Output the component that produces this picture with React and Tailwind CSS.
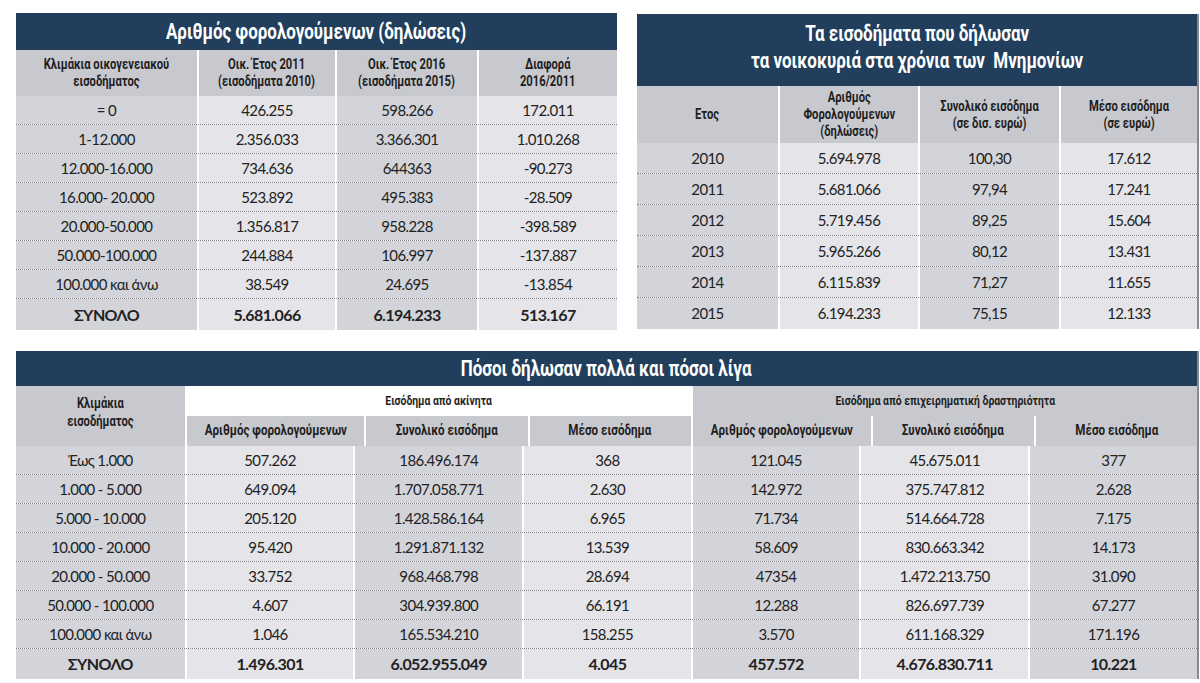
import React from "react";

const HEAD = { fontFamily: 'Roboto, "Liberation Sans", sans-serif' };
const BODY = { fontFamily: 'Lato, "Open Sans", "Liberation Sans", sans-serif' };

const DARK = "bg-[#d3d4da]";
const LIGHT = "bg-[#e4e4e9]";

const t1 = [
  ["= 0", "426.255", "598.266", "172.011"],
  ["1-12.000", "2.356.033", "3.366.301", "1.010.268"],
  ["12.000-16.000", "734.636", "644363", "-90.273"],
  ["16.000- 20.000", "523.892", "495.383", "-28.509"],
  ["20.000-50.000", "1.356.817", "958.228", "-398.589"],
  ["50.000-100.000", "244.884", "106.997", "-137.887"],
  ["100.000 και άνω", "38.549", "24.695", "-13.854"],
];
const t1w = ["w-[181px]", "w-[138px]", "w-[142px]", "w-[140px]"];

const t2 = [
  ["2010", "5.694.978", "100,30", "17.612"],
  ["2011", "5.681.066", "97,94", "17.241"],
  ["2012", "5.719.456", "89,25", "15.604"],
  ["2013", "5.965.266", "80,12", "13.431"],
  ["2014", "6.115.839", "71,27", "11.655"],
  ["2015", "6.194.233", "75,15", "12.133"],
];
const t2w = ["w-[141px]", "w-[140px]", "w-[141px]", "w-[138px]"];

const t3 = [
  ["Έως 1.000", "507.262", "186.496.174", "368", "121.045", "45.675.011", "377"],
  ["1.000 - 5.000", "649.094", "1.707.058.771", "2.630", "142.972", "375.747.812", "2.628"],
  ["5.000 - 10.000", "205.120", "1.428.586.164", "6.965", "71.734", "514.664.728", "7.175"],
  ["10.000 - 20.000", "95.420", "1.291.871.132", "13.539", "58.609", "830.663.342", "14.173"],
  ["20.000 - 50.000", "33.752", "968.468.798", "28.694", "47354", "1.472.213.750", "31.090"],
  ["50.000 - 100.000", "4.607", "304.939.800", "66.191", "12.288", "826.697.739", "67.277"],
  ["100.000 και άνω", "1.046", "165.534.210", "158.255", "3.570", "611.168.329", "171.196"],
];
const t3total = ["ΣΥΝΟΛΟ", "1.496.301", "6.052.955.049", "4.045", "457.572", "4.676.830.711", "10.221"];

function Narrow({ children }) {
  return <span className="inline-block scale-x-[0.8] whitespace-nowrap text-center">{children}</span>;
}

function Row({ cells, widths, h, bold, last }) {
  return (
    <div className={`flex ${h} ${!last ? "border-b border-dotted border-[#7c7c82]" : ""}`}>
      {cells.map((c, i) => (
        <div
          key={i}
          className={`${widths[i]} h-full ${i % 2 === 0 ? DARK : LIGHT} ${i > 0 ? "border-l-2 border-white" : ""} flex items-center justify-center text-[#222] whitespace-nowrap ${bold ? "font-bold text-[16px] tracking-[-0.6px]" : "text-[15px] tracking-[-0.6px]"}`}
          style={BODY}
        >
          {c}
        </div>
      ))}
    </div>
  );
}

function HeadCell({ children, w, i, h }) {
  return (
    <div
      className={`${w} ${h} bg-[#c8c9cf] ${i > 0 ? "border-l-2 border-white" : ""} flex items-center justify-center text-[14px] font-bold leading-[17px] text-[#1e1e1e]`}
      style={HEAD}
    >
      <Narrow>{children}</Narrow>
    </div>
  );
}

function Title({ children, h, extra = "" }) {
  return (
    <div className={`${h} bg-[#213f5c] flex items-center justify-center text-white text-[21.5px] font-bold leading-[27px] ${extra}`} style={HEAD}>
      <span className="inline-block scale-x-[0.79] whitespace-nowrap text-center">{children}</span>
    </div>
  );
}

function Table1() {
  return (
    <div className="w-[601px]">
      <Title h="h-[37px]">Αριθμός φορολογούμενων (δηλώσεις)</Title>
      <div className="flex">
        {[
          <>Κλιμάκια οικογενειακού<br />εισοδήματος</>,
          <>Οικ. Έτος 2011<br />(εισοδήματα 2010)</>,
          <>Οικ. Έτος 2016<br />(εισοδήματα 2015)</>,
          <>Διαφορά<br />2016/2011</>,
        ].map((c, i) => (
          <HeadCell key={i} i={i} w={t1w[i]} h="h-[46px]">{c}</HeadCell>
        ))}
      </div>
      {t1.map((r, k) => (
        <Row key={k} cells={r} widths={t1w} h="h-[29px]" />
      ))}
      <Row cells={["ΣΥΝΟΛΟ", "5.681.066", "6.194.233", "513.167"]} widths={t1w} h="h-[31px]" bold last />
    </div>
  );
}

function Table2() {
  return (
    <div className="w-[562px] border-r-2 border-[#8a8a8e] mt-[1px]">
      <Title h="h-[72px]" extra="pb-[6px]">
        Τα εισοδήματα που δήλωσαν<br />τα νοικοκυριά στα χρόνια των&nbsp; Μνημονίων
      </Title>
      <div className="flex">
        {[
          <>Ετος</>,
          <>Αριθμός<br />Φορολογούμενων<br />(δηλώσεις)</>,
          <>Συνολικό εισόδημα<br />(σε δισ. ευρώ)</>,
          <>Μέσο εισόδημα<br />(σε ευρώ)</>,
        ].map((c, i) => (
          <HeadCell key={i} i={i} w={t2w[i]} h="h-[57px]">{c}</HeadCell>
        ))}
      </div>
      {t2.map((r, k) => (
        <Row key={k} cells={r} widths={t2w} h="h-[31px]" last={k === t2.length - 1} />
      ))}
    </div>
  );
}

function Table3() {
  const w = Array(7).fill("w-[168.7px]");
  const sub = ["Αριθμός φορολογούμενων", "Συνολικό εισόδημα", "Μέσο εισόδημα"];
  const sub2 = ["Αριθμός φορολογούμενων", "Συνολικό  εισόδημα", "Μέσο εισόδημα"];
  return (
    <div className="w-[1183px] border-r-2 border-[#8a8a8e]">
      <Title h="h-[35px]">Πόσοι δήλωσαν πολλά και πόσοι λίγα</Title>
      <div className="flex h-[60px]">
        <div className="w-[168.7px] bg-[#c8c9cf] flex items-center justify-center text-[14px] font-bold leading-[18px] text-[#1e1e1e] pb-[8px]" style={HEAD}>
          <Narrow>Κλιμάκια<br />εισοδήματος</Narrow>
        </div>
        <div className="w-[506.1px] flex flex-col bg-white border-l-2 border-white">
          <div className="h-[30px] flex items-center justify-center text-[13px] font-bold text-[#1e1e1e]" style={HEAD}>
            <Narrow>Εισόδημα από ακίνητα</Narrow>
          </div>
          <div className="flex h-[30px]">
            {sub.map((s, i) => (
              <div key={i} className={`flex-1 bg-[#c8c9cf] ${i > 0 ? "border-l-2 border-white" : ""} flex items-center justify-center text-[14.5px] font-bold text-[#1e1e1e]`} style={HEAD}>
                <Narrow>{s}</Narrow>
              </div>
            ))}
          </div>
        </div>
        <div className="flex-1 flex flex-col bg-[#c8c9cf] border-l-2 border-white">
          <div className="h-[30px] flex items-center justify-center text-[13px] font-bold text-[#1e1e1e]" style={HEAD}>
            <Narrow>Εισόδημα από επιχειρηματική δραστηριότητα</Narrow>
          </div>
          <div className="flex h-[30px]">
            {sub2.map((s, i) => (
              <div key={i} className={`flex-1 ${i > 0 ? "border-l-2 border-white" : ""} flex items-center justify-center text-[14.5px] font-bold text-[#1e1e1e] whitespace-pre`} style={HEAD}>
                <Narrow>{s}</Narrow>
              </div>
            ))}
          </div>
        </div>
      </div>
      {t3.map((r, k) => (
        <Row key={k} cells={r} widths={w} h="h-[29px]" />
      ))}
      <Row cells={t3total} widths={w} h="h-[30px]" bold last />
    </div>
  );
}

export default function App() {
  return (
    <div className="w-[1200px] h-[683px] bg-white overflow-hidden pl-[16px] pt-[13px]">
      <div className="flex gap-[20px] items-start">
        <Table1 />
        <Table2 />
      </div>
      <div className="mt-[21px]">
        <Table3 />
      </div>
    </div>
  );
}
